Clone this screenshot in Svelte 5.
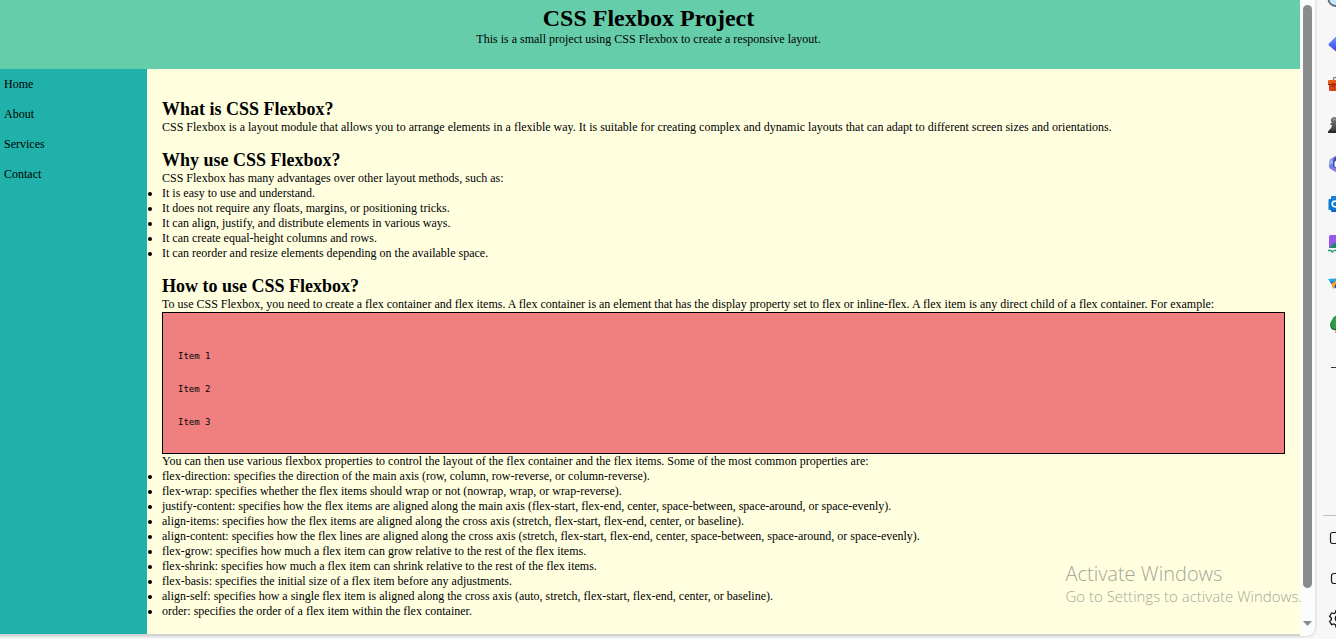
<script>
  const links = ['Home', 'About', 'Services', 'Contact'];

  const advantages = [
    'It is easy to use and understand.',
    'It does not require any floats, margins, or positioning tricks.',
    'It can align, justify, and distribute elements in various ways.',
    'It can create equal-height columns and rows.',
    'It can reorder and resize elements depending on the available space.'
  ];

  const properties = [
    'flex-direction: specifies the direction of the main axis (row, column, row-reverse, or column-reverse).',
    'flex-wrap: specifies whether the flex items should wrap or not (nowrap, wrap, or wrap-reverse).',
    'justify-content: specifies how the flex items are aligned along the main axis (flex-start, flex-end, center, space-between, space-around, or space-evenly).',
    'align-items: specifies how the flex items are aligned along the cross axis (stretch, flex-start, flex-end, center, or baseline).',
    'align-content: specifies how the flex lines are aligned along the cross axis (stretch, flex-start, flex-end, center, space-between, space-around, or space-evenly).',
    'flex-grow: specifies how much a flex item can grow relative to the rest of the flex items.',
    'flex-shrink: specifies how much a flex item can shrink relative to the rest of the flex items.',
    'flex-basis: specifies the initial size of a flex item before any adjustments.',
    'align-self: specifies how a single flex item is aligned along the cross axis (auto, stretch, flex-start, flex-end, center, or baseline).',
    'order: specifies the order of a flex item within the flex container.'
  ];

  const example = '\n\nItem 1\n\n\nItem 2\n\n\nItem 3\n\n';
</script>

<div class="window">
  <div class="frame">
    <div class="page">
      <header>
        <h1>CSS Flexbox Project</h1>
        <p>This is a small project using CSS Flexbox to create a responsive layout.</p>
      </header>
      <div class="columns">
        <nav>
          {#each links as link}
            <a href="#{link.toLowerCase()}">{link}</a>
          {/each}
        </nav>
        <main>
          <section>
            <h2>What is CSS Flexbox?</h2>
            <p>CSS Flexbox is a layout module that allows you to arrange elements in a flexible way. It is suitable for creating complex and dynamic layouts that can adapt to different screen sizes and orientations.</p>
          </section>
          <section>
            <h2>Why use CSS Flexbox?</h2>
            <p>CSS Flexbox has many advantages over other layout methods, such as:</p>
            <ul>
              {#each advantages as item}<li>{item}</li>{/each}
            </ul>
          </section>
          <section>
            <h2>How to use CSS Flexbox?</h2>
            <p>To use CSS Flexbox, you need to create a flex container and flex items. A flex container is an element that has the display property set to flex or inline-flex. A flex item is any direct child of a flex container. For example:</p>
            <pre>{example}</pre>
            <p>You can then use various flexbox properties to control the layout of the flex container and the flex items. Some of the most common properties are:</p>
            <ul>
              {#each properties as item}<li>{item}</li>{/each}
            </ul>
          </section>
        </main>
      </div>
    </div>
    <div class="scrollbar">
      <div class="thumb"></div>
      <svg width="9" height="5" viewBox="0 0 9 5"><path d="M0 0h9L4.500 5z" fill="#8b8b8b" /></svg>
    </div>
  </div>

  <aside class="rail">
    <button aria-label="Search">
      <svg viewBox="0 0 24 24"><circle cx="9.500" cy="7" r="7" fill="#c5e6f8" stroke="#5e6973" stroke-width="1.800" /></svg>
    </button>
    <button aria-label="Shopping">
      <svg viewBox="0 0 24 24">
        <defs><linearGradient id="gem" x1="0" y1="0" x2="0" y2="1"><stop offset="0" stop-color="#6ba2ff" /><stop offset="1" stop-color="#3d38e8" /></linearGradient></defs>
        <path d="M3 11.500 10.500 4q1.500-1 3 0l8 8-8 8q-1.500 1-3 0L3 13.500q-1-1 0-2z" fill="url(#gem)" />
      </svg>
    </button>
    <button aria-label="Tools">
      <svg viewBox="0 0 24 24">
        <path d="M7.500 8V6.500q0-1 1-1h7q1 0 1 1V8" fill="none" stroke="#8a8a8a" stroke-width="1.500" />
        <path d="M3 8h18q1 0 1 1v4H2V9q0-1 1-1z" fill="#e85b1c" />
        <path d="M3 13h18v6H4q-1 0-1-1z" fill="#d84315" />
        <path d="M2 12.500h20" stroke="#8e2a0c" />
        <path d="M6 11h3v4H6z" fill="#a8320d" />
      </svg>
    </button>
    <button aria-label="Games">
      <svg viewBox="0 0 24 24">
        <defs><linearGradient id="pawn" x1="0" y1="0" x2="0" y2="1"><stop offset="0" stop-color="#858585" /><stop offset="1" stop-color="#303030" /></linearGradient></defs>
        <path d="M9 5a3.500 3.500 0 0 0-4 4.500l1 1.500H4.500v2H6q0 3-3 5l-1 3h14V5z" fill="url(#pawn)" />
        <path d="M2 20h16" stroke="#242424" stroke-width="1.500" />
        <path d="M7.500 8.500q0-1.500 2-1.500" fill="none" stroke="#aaa" />
      </svg>
    </button>
    <button aria-label="Microsoft 365">
      <svg viewBox="0 0 24 24">
        <defs><linearGradient id="hex" x1="0" y1="0" x2="0" y2="1"><stop offset="0" stop-color="#6b60cf" /><stop offset="0.400" stop-color="#aab4ee" /><stop offset="0.600" stop-color="#6a82e0" /><stop offset="1" stop-color="#b473ea" /></linearGradient></defs>
        <path d="M10.500 3.500 4.500 7Q3 8 3 9.500v5Q3 16 4.500 17l6 3.500q1.500 1 3 0l6-3.500q1.500-1 1.500-2.500v-5Q21 8 19.500 7l-6-3.500q-1.500-1-3 0z" fill="url(#hex)" />
        <path d="M12 3.500 9 5.500q-2 1.500-2 4v5l5 3z" fill="#344bb5" />
        <path d="m12 7.500-3.500 2.300v4.400l3.500 2.300z" fill="#fff" />
      </svg>
    </button>
    <button aria-label="Outlook">
      <svg viewBox="0 0 24 24">
        <path d="M6 4h15v16H6q-1 0-1-1V5q0-1 1-1z" fill="#0b66c3" />
        <path d="M6 4h15v4H5V5q0-1 1-1z" fill="#1784d8" />
        <rect x="2.500" y="7" width="13" height="11" rx="1" fill="#0878d4" />
        <circle cx="9" cy="12" r="2.800" fill="none" stroke="#fff" stroke-width="1.700" />
      </svg>
    </button>
    <button aria-label="Image Creator">
      <svg viewBox="0 0 24 24">
        <path d="M4.500 3H20v13H3V4.500Q3 3 4.500 3z" fill="#9659ed" />
        <path d="M3 16q2-1 4-4 2-2 5-1v5z" fill="#168b68" />
        <path d="M2 18.500h3l1.500 1.500q2-3 5-.5" fill="none" stroke="#2c9d7b" stroke-width="1.500" />
      </svg>
    </button>
    <button aria-label="Drop">
      <svg viewBox="0 0 24 24">
        <path d="M2 7 22 6l-10 5-5 3z" fill="#27a7e8" />
        <path d="m4 10 8-1.500L7 14z" fill="#1670bd" />
        <path d="m5.500 11.500 6.500-4v8l-3-1-2 3z" fill="#f5a126" />
        <path d="m8 15 2-3 2 1v5z" fill="#174fb0" />
      </svg>
    </button>
    <button aria-label="Tree">
      <svg viewBox="0 0 24 24">
        <defs><linearGradient id="leaf"><stop offset="0" stop-color="#218745" /><stop offset="1" stop-color="#51b13d" /></linearGradient></defs>
        <path d="M9 15h6v6H9z" fill="#f09a36" />
        <path d="M12 3Q7 4 6 8q-2 2-2 5 0 3 3 4h7V3z" fill="url(#leaf)" />
        <path d="M5 15q2 3 7 1v2H7q-2-1-2-3z" fill="#14683c" />
      </svg>
    </button>
    <button aria-label="Customize">
      <svg viewBox="0 0 24 24"><path d="M5 15.500h14M12 8.500v14" fill="none" stroke="#333" /></svg>
    </button>
    <hr />
    <button aria-label="Screenshot">
      <svg viewBox="0 0 24 24"><rect x="4.500" y="6.500" width="14" height="11" rx="2" fill="none" stroke="#1b1b1b" stroke-width="1.200" /></svg>
    </button>
    <button aria-label="Open externally">
      <svg viewBox="0 0 24 24"><rect x="5.500" y="7.500" width="13" height="10" rx="2.500" fill="none" stroke="#1b1b1b" stroke-width="1.200" /></svg>
    </button>
    <button aria-label="Settings">
      <svg viewBox="0 0 24 24" fill="none" stroke="#1b1b1b" stroke-width="1.300">
        <path d="m10 4.500-.6 2.300-1.500.8-2.300-.7-2 3.400 1.800 1.700v1.600l-1.800 1.700 2 3.400 2.300-.7 1.500.8.6 2.300h4l.6-2.300 1.500-.8 2.300.7 2-3.400-1.800-1.700V12l1.800-1.700-2-3.400-2.300.7-1.500-.8-.6-2.300z" />
        <circle cx="12" cy="12.500" r="2.700" />
      </svg>
    </button>
  </aside>

  <div class="watermark">
    <strong>Activate Windows</strong>
    <span>Go to Settings to activate Windows.</span>
  </div>
</div>

<style>
  :global(body) {
    margin: 0;
    background: #f7f7f7;
  }

  .window {
    position: relative;
    display: flex;
    min-height: 100vh;
    align-items: stretch;
    overflow: hidden;
    background: #f7f7f7;
    color: #000;
    font: 12px/15px "Liberation Serif", serif;
  }

  .frame {
    display: flex;
    flex: 1;
    min-width: 0;
    margin-bottom: 3px;
    border-radius: 0 0 8px 0;
    background: #d3d3d3;
    box-shadow: 0 0 3px #bbb;
    overflow: hidden;
  }

  .page {
    display: flex;
    flex: 1;
    flex-direction: column;
    min-width: 0;
    margin-bottom: 2px;
  }

  h1, h2, p, ul, pre {
    margin: 0;
    padding: 0;
  }

  header {
    padding: 5px 7px 22px 4px;
    background: mediumaquamarine;
    text-align: center;
  }

  h1 {
    font-size: 24px;
    line-height: 27px;
  }

  h2 {
    font-size: 18px;
    line-height: 21px;
  }

  .columns {
    display: flex;
    flex: 1;
  }

  nav {
    display: flex;
    flex: 0 0 139px;
    flex-direction: column;
    gap: 15px;
    padding: 8px 4px;
    background: lightseagreen;
  }

  nav a {
    color: inherit;
    text-decoration: none;
  }

  main {
    display: flex;
    flex: 1;
    flex-direction: column;
    gap: 15px;
    min-width: 0;
    padding: 30px 15px 15px;
    background: #ffffe0;
  }

  pre {
    padding: 16px 15px 14px;
    border: 1px solid #000;
    background: lightcoral;
    font: 9px/11px "DejaVu Sans Mono", monospace;
  }

  .scrollbar {
    display: flex;
    flex: 0 0 15px;
    flex-direction: column;
    align-items: center;
    justify-content: space-between;
    gap: 33px;
    padding: 5px 0 10px;
    background: #fcfcfc;
  }

  .thumb {
    flex: 1;
    width: 9px;
    border-radius: 5px;
    background: #8b8b8b;
  }

  .rail {
    display: flex;
    flex: 0 0 21px;
    flex-direction: column;
    gap: 16px;
    box-sizing: border-box;
    margin-top: -8px;
    padding: 0 0 9px 11px;
    overflow: hidden;
  }

  .rail button {
    flex: none;
    width: 24px;
    height: 24px;
    padding: 0;
    border: 0;
    background: none;
  }

  .rail svg {
    display: block;
    width: 24px;
    height: 24px;
  }

  hr {
    flex: none;
    width: 24px;
    margin: auto 0 -6px -3px;
    border: 0;
    border-top: 1px solid #bdbdbd;
  }

  .watermark {
    position: absolute;
    right: 34px;
    bottom: 34px;
    display: flex;
    flex-direction: column;
    color: #a6a69b;
    font: 300 15px/18px "Open Sans", sans-serif;
    pointer-events: none;
  }

  .watermark strong {
    font-size: 20px;
    font-weight: 300;
    line-height: 26px;
  }
</style>
